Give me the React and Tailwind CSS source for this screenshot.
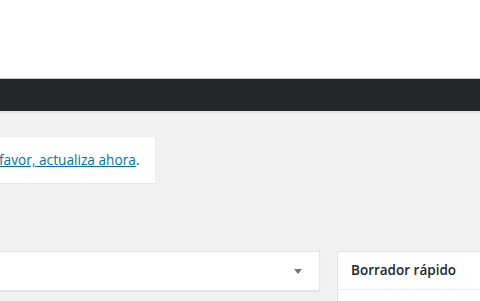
export default function App() {
    return (
        <div className="h-[301px] w-[480px] overflow-hidden flex flex-col bg-[#f1f1f1] font-['Open_Sans',sans-serif]">
            <div className="h-[78px] bg-white shrink-0" />
            <div className="h-px bg-[#c7c7c7] shrink-0" />
            <div className="h-[32px] bg-[#23282d] shrink-0" />
            <div className="h-[2px] bg-[#e4e4e4] shrink-0" />
            <div className="flex flex-col">
                <div className="mt-[24px] w-[155px] h-[46px] bg-white shadow-[0_1px_1px_rgba(0,0,0,0.04)] flex items-center">
                    <p className="text-[13.7px] text-[#444] whitespace-nowrap -ml-[1px] pt-[1px]">
                        <a href="#" className="text-[#0073aa] underline">favor, actualiza ahora</a>.
                    </p>
                </div>
                <div className="mt-[68px] flex items-start">
                    <div className="w-[320px] h-[40px] bg-white border border-[#e5e5e5] border-l-0 shadow-[0_1px_1px_rgba(0,0,0,0.06)] flex items-center justify-end pr-[16px]">
                        <svg width="10" height="10" viewBox="0 0 10 10">
                            <path d="M1 3h8L5 8z" fill="#72777c" />
                        </svg>
                    </div>
                    <div className="ml-[17px] flex-1 bg-white border border-[#e5e5e5] border-r-0">
                        <h2 className="h-[38px] px-[13px] flex items-center text-[13.5px] font-semibold text-[#23282d] border-b border-[#eee]">
                            Borrador rápido
                        </h2>
                        <div className="h-[20px]" />
                    </div>
                </div>
            </div>
        </div>
    );
}
